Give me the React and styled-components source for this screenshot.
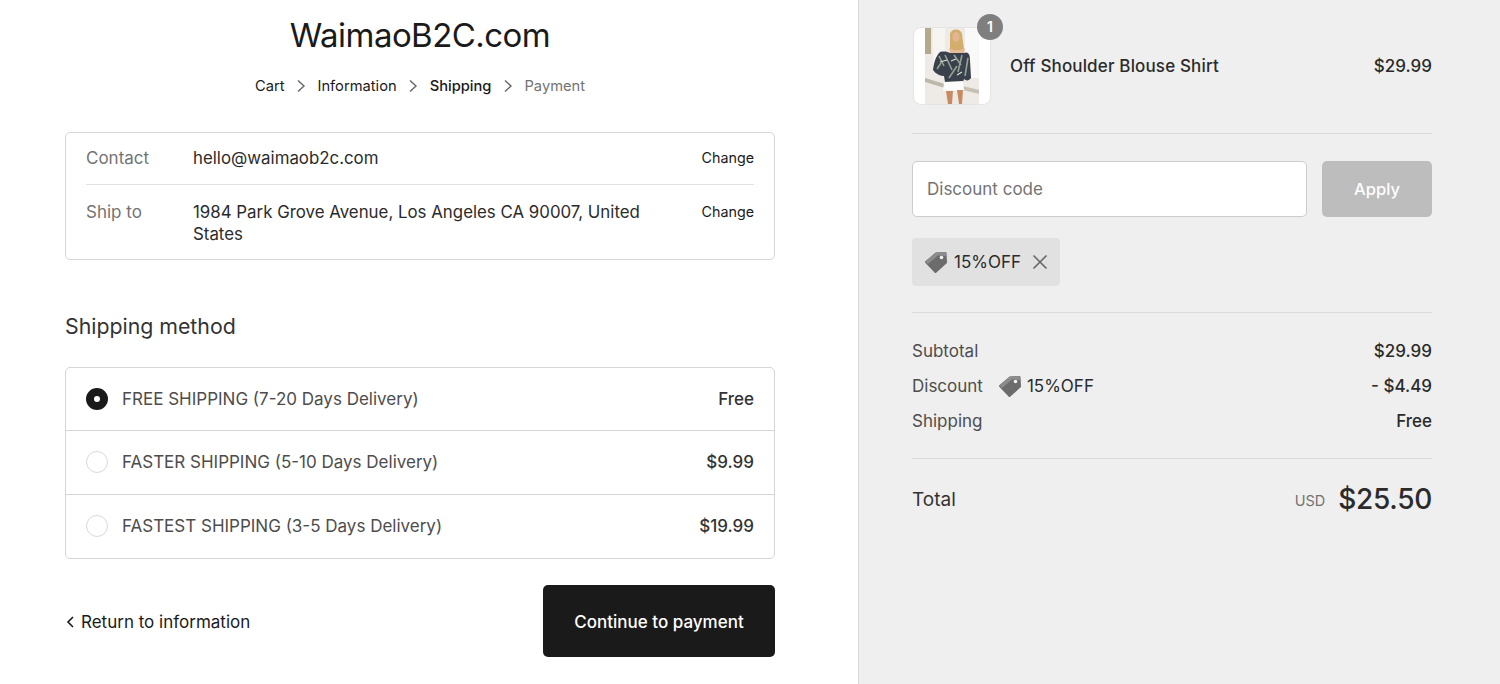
import React from 'react';
import styled, { createGlobalStyle } from 'styled-components';

const GlobalStyle = createGlobalStyle`
    html, body {
        margin: 0;
        padding: 0;
        background: #fff;
    }
    body {
        font-family: Inter, "Liberation Sans", sans-serif;
        color: #1a1a1a;
    }
    * { box-sizing: border-box; }
`;

const shippingMethods = [
    { name: 'FREE SHIPPING (7-20 Days Delivery)', price: 'Free', checked: true },
    { name: 'FASTER SHIPPING (5-10 Days Delivery)', price: '$9.99' },
    { name: 'FASTEST SHIPPING (3-5 Days Delivery)', price: '$19.99' },
];

const Chevron = () => (
    <svg width="10" height="14" viewBox="0 0 10 14" fill="none" stroke="#666" strokeWidth="1.4">
        <path d="M2 1.5 L8 7 L2 12.5" />
    </svg>
);

const TagIcon = () => (
    <svg width="24" height="24" viewBox="0 0 24 24">
        <path d="M2 12 L12 3.5 L21.5 3 L22 12.5 L11.5 22 Z" fill="#6c6c6c" stroke="#6c6c6c" strokeWidth="2" strokeLinejoin="round" />
        <path d="M1.5 11.5 L12 2.5 L21.5 2 L22.5 6 L14 5.5 L4 14 Z" fill="#8c8c8c" />
        <circle cx="17.5" cy="7.5" r="1.8" fill="#f1f1f1" />
    </svg>
);

const ProductPhoto = () => (
    <svg width="54" height="76" viewBox="0 0 54 76">
        <rect width="54" height="76" fill="#eeeae6" />
        <rect x="0" y="0" width="6" height="26" fill="#b3a98c" />
        <rect x="8" y="0" width="12" height="40" fill="#f6f5f2" />
        <rect x="40" y="0" width="14" height="50" fill="#f9f9f8" />
        <path d="M0 50 L20 56 L20 60 L0 54 Z" fill="#bdb8aa" />
        <path d="M38 58 L54 62 L54 66 L38 62 Z" fill="#c6c1b4" />
        <path d="M25 6 C26 0 36 0 37 6 L39 22 L32 26 L25 22 Z" fill="#d3ad6c" />
        <ellipse cx="31" cy="9" rx="3.6" ry="5" fill="#e3b690" />
        <path d="M24 20 C28 23 34 23 40 20 L39 25 L25 25 Z" fill="#e6bb98" />
        <path d="M15 24 C20 23 23 24 25 25 L39 25 C43 23 45 26 45 32 L46 50 C44 53 41 53 39 51 L38 54 L20 54 L19 48 C15 48 11 46 8 42 C9 34 11 28 15 24 Z" fill="#3a414c" />
        <path d="M14 28 L19 38 M20 27 L27 42 M29 27 L36 37 M37 27 L33 44 M43 30 L40 48 M24 50 L32 38 M12 41 L16 35" stroke="#93a293" strokeWidth="1.6" fill="none" />
        <path d="M15 34 L22 32 M32 47 L37 44 M26 33 L31 31" stroke="#dfe3da" strokeWidth="1.2" fill="none" />
        <path d="M19 54 L38 53 L39 62 L18 63 Z" fill="#fcfcfc" />
        <path d="M21 63 L28 63 L27 76 L23 76 Z M32 62 L38 62 L37 76 L34 76 Z" fill="#c98a62" />
    </svg>
);

const App = () => {
    return (
        <Page>
            <GlobalStyle />
            <Main>
                <Title>WaimaoB2C.com</Title>
                <Breadcrumb>
                    <Crumb>Cart</Crumb>
                    <Chevron />
                    <Crumb>Information</Crumb>
                    <Chevron />
                    <Crumb $active>Shipping</Crumb>
                    <Chevron />
                    <Crumb $muted>Payment</Crumb>
                </Breadcrumb>

                <ReviewBox>
                    <ReviewRow>
                        <ReviewLabel>Contact</ReviewLabel>
                        <ReviewValue>hello@waimaob2c.com</ReviewValue>
                        <ChangeLink>Change</ChangeLink>
                    </ReviewRow>
                    <ReviewRow $last>
                        <ReviewLabel>Ship to</ReviewLabel>
                        <ReviewValue>1984 Park Grove Avenue, Los Angeles CA 90007, United States</ReviewValue>
                        <ChangeLink>Change</ChangeLink>
                    </ReviewRow>
                </ReviewBox>

                <SectionTitle>Shipping method</SectionTitle>
                <MethodBox>
                    {shippingMethods.map((method) => (
                        <MethodRow key={method.name}>
                            <Radio $checked={method.checked} />
                            <MethodName>{method.name}</MethodName>
                            <MethodPrice>{method.price}</MethodPrice>
                        </MethodRow>
                    ))}
                </MethodBox>

                <Actions>
                    <BackLink>
                        <svg width="10" height="14" viewBox="0 0 10 14" fill="none" stroke="#1a1a1a" strokeWidth="1.6">
                            <path d="M8 2 L3 7 L8 12" />
                        </svg>
                        Return to information
                    </BackLink>
                    <ContinueButton>Continue to payment</ContinueButton>
                </Actions>
            </Main>

            <Aside>
                <ProductRow>
                    <Thumb>
                        <ProductPhoto />
                        <Badge>1</Badge>
                    </Thumb>
                    <ProductName>Off Shoulder Blouse Shirt</ProductName>
                    <ProductPrice>$29.99</ProductPrice>
                </ProductRow>

                <DiscountSection>
                    <DiscountForm>
                        <DiscountInput placeholder="Discount code" />
                        <ApplyButton>Apply</ApplyButton>
                    </DiscountForm>
                    <CouponTag>
                        <TagIcon />
                        <span>15%OFF</span>
                        <svg width="16" height="16" viewBox="0 0 16 16" stroke="#666" strokeWidth="1.6">
                            <path d="M1.5 1.5 L14.5 14.5 M14.5 1.5 L1.5 14.5" />
                        </svg>
                    </CouponTag>
                </DiscountSection>

                <Summary>
                    <SummaryRow>
                        <SummaryLabel>Subtotal</SummaryLabel>
                        <SummaryValue>$29.99</SummaryValue>
                    </SummaryRow>
                    <SummaryRow>
                        <SummaryLabel>
                            Discount
                            <SummaryCoupon>
                                <TagIcon />
                                15%OFF
                            </SummaryCoupon>
                        </SummaryLabel>
                        <SummaryValue>- $4.49</SummaryValue>
                    </SummaryRow>
                    <SummaryRow>
                        <SummaryLabel>Shipping</SummaryLabel>
                        <SummaryValue>Free</SummaryValue>
                    </SummaryRow>
                </Summary>

                <TotalRow>
                    <TotalLabel>Total</TotalLabel>
                    <TotalAmount>
                        <Currency>USD</Currency>
                        <TotalValue>$25.50</TotalValue>
                    </TotalAmount>
                </TotalRow>
            </Aside>
        </Page>
    );
};

const Page = styled.div`
    display: flex;
    width: 100%;
    height: 684px;
    overflow: hidden;
`;
const Main = styled.main`
    width: 859px;
    padding: 14px 83px 0 65px;
    background: #fff;
    border-right: 1px solid #d9d9d9;
`;
const Title = styled.h1`
    margin: 0;
    font-size: 33px;
    line-height: 42px;
    font-weight: 400;
    letter-spacing: -0.55px;
    text-align: center;
    color: #1a1a1a;
`;
const Breadcrumb = styled.nav`
    display: flex;
    justify-content: center;
    align-items: center;
    gap: 11.5px;
    height: 20px;
    margin-top: 20px;
`;
const Crumb = styled.span`
    font-size: 14.7px;
    font-weight: ${({ $active }) => ($active ? 500 : 400)};
    color: ${({ $muted }) => ($muted ? '#737373' : '#1a1a1a')};
`;
const ReviewBox = styled.section`
    margin-top: 36px;
    padding: 0 20px;
    border: 1px solid #d6d6d6;
    border-radius: 5px;
`;
const ReviewRow = styled.div`
    display: flex;
    align-items: flex-start;
    padding: ${({ $last }) => ($last ? '16px 0 14px' : '14px 0 15px')};
    border-bottom: ${({ $last }) => ($last ? 'none' : '1px solid #e2e2e2')};
`;
const ReviewLabel = styled.div`
    width: 107px;
    flex-shrink: 0;
    font-size: 17px;
    line-height: 22px;
    color: #737373;
`;
const ReviewValue = styled.div`
    flex: 1;
    font-size: 16.85px;
    line-height: 22px;
    color: #2b2b2b;
    padding-right: 40px;
`;
const ChangeLink = styled.a`
    font-size: 14.3px;
    line-height: 22px;
    color: #1a1a1a;
`;
const SectionTitle = styled.h2`
    margin: 51px 0 26px;
    font-size: 21.3px;
    line-height: 30px;
    font-weight: 400;
    color: #333;
`;
const MethodBox = styled.section`
    border: 1px solid #d6d6d6;
    border-radius: 5px;
`;
const MethodRow = styled.label`
    display: flex;
    align-items: center;
    height: 63.3px;
    padding: 0 20px;
    border-bottom: 1px solid #d6d6d6;
    &:last-child { border-bottom: none; }
`;
const Radio = styled.span`
    width: 22px;
    height: 22px;
    margin-right: 14px;
    flex-shrink: 0;
    border-radius: 50%;
    border: ${({ $checked }) => ($checked ? '8.5px solid #1a1a1a' : '1px solid #d9d9d9')};
    background: #fff;
`;
const MethodName = styled.span`
    flex: 1;
    font-size: 17px;
    color: #4d4d4d;
`;
const MethodPrice = styled.span`
    font-size: 17px;
    font-weight: 500;
    color: #333;
`;
const Actions = styled.div`
    display: flex;
    justify-content: space-between;
    align-items: center;
    margin-top: 26px;
`;
const BackLink = styled.a`
    display: flex;
    align-items: center;
    gap: 6px;
    padding-top: 2px;
    font-size: 17px;
    color: #1a1a1a;
`;
const ContinueButton = styled.button`
    width: 232px;
    height: 72px;
    padding-top: 3px;
    border: none;
    border-radius: 5px;
    background: #1a1a1a;
    color: #fff;
    font-family: inherit;
    font-size: 17px;
    font-weight: 500;
`;
const Aside = styled.aside`
    flex: 1;
    padding: 27px 68px 0 53px;
    background: #efefef;
`;
const ProductRow = styled.div`
    display: flex;
    align-items: center;
    height: 107px;
    padding-bottom: 29px;
    border-bottom: 1px solid #dcdcdc;
`;
const Thumb = styled.div`
    position: relative;
    display: flex;
    justify-content: center;
    align-items: center;
    width: 78px;
    height: 78px;
    margin: 0 19px 0 1px;
    background: #fff;
    border: 1px solid #e4e4e4;
    border-radius: 8px;
`;
const Badge = styled.span`
    position: absolute;
    top: -14px;
    right: -13px;
    display: flex;
    justify-content: center;
    align-items: center;
    width: 26px;
    height: 26px;
    border-radius: 50%;
    background: #7f7f7f;
    color: #fff;
    font-size: 14px;
    font-weight: 600;
`;
const ProductName = styled.span`
    flex: 1;
    font-size: 17px;
    font-weight: 500;
    letter-spacing: 0.15px;
    color: #2b2b2b;
`;
const ProductPrice = styled.span`
    font-size: 17px;
    font-weight: 500;
    color: #2b2b2b;
`;
const DiscountSection = styled.section`
    padding: 27px 0 26px;
    border-bottom: 1px solid #dcdcdc;
`;
const DiscountForm = styled.div`
    display: flex;
    gap: 15px;
`;
const DiscountInput = styled.input`
    flex: 1;
    min-width: 0;
    height: 56px;
    padding: 0 14px;
    background: #fff;
    border: 1px solid #cccccc;
    border-radius: 5px;
    font-family: inherit;
    font-size: 17px;
    &::placeholder { color: #737373; opacity: 1; }
`;
const ApplyButton = styled.button`
    width: 110px;
    height: 56px;
    border: none;
    border-radius: 5px;
    background: #bdbdbd;
    color: #fff;
    font-family: inherit;
    font-size: 16.5px;
    font-weight: 500;
`;
const CouponTag = styled.div`
    display: inline-flex;
    align-items: center;
    gap: 6px;
    height: 48px;
    margin-top: 21px;
    padding: 0 12px;
    border-radius: 4px;
    background: #e1e1e1;
    font-size: 17px;
    color: #2b2b2b;
    vertical-align: top;
    svg:last-child { margin-left: 5px; }
`;
const Summary = styled.section`
    padding: 20px 0 20px;
    border-bottom: 1px solid #dcdcdc;
`;
const SummaryRow = styled.div`
    display: flex;
    justify-content: space-between;
    align-items: center;
    height: 35px;
`;
const SummaryLabel = styled.span`
    display: flex;
    align-items: center;
    font-size: 17px;
    color: #4d4d4d;
`;
const SummaryCoupon = styled.span`
    display: flex;
    align-items: center;
    gap: 5px;
    margin-left: 15px;
    color: #2b2b2b;
`;
const SummaryValue = styled.span`
    font-size: 17px;
    font-weight: 500;
    color: #2b2b2b;
`;
const TotalRow = styled.div`
    display: flex;
    justify-content: space-between;
    align-items: center;
    margin-top: 20px;
    height: 40px;
`;
const TotalLabel = styled.span`
    font-size: 19px;
    color: #333;
`;
const TotalAmount = styled.span`
    display: flex;
    align-items: center;
    gap: 13px;
`;
const Currency = styled.span`
    font-size: 14.5px;
    color: #737373;
    margin-top: 3px;
`;
const TotalValue = styled.span`
    font-size: 28px;
    font-weight: 500;
    color: #2b2b2b;
    letter-spacing: -0.3px;
`;

export default App;
